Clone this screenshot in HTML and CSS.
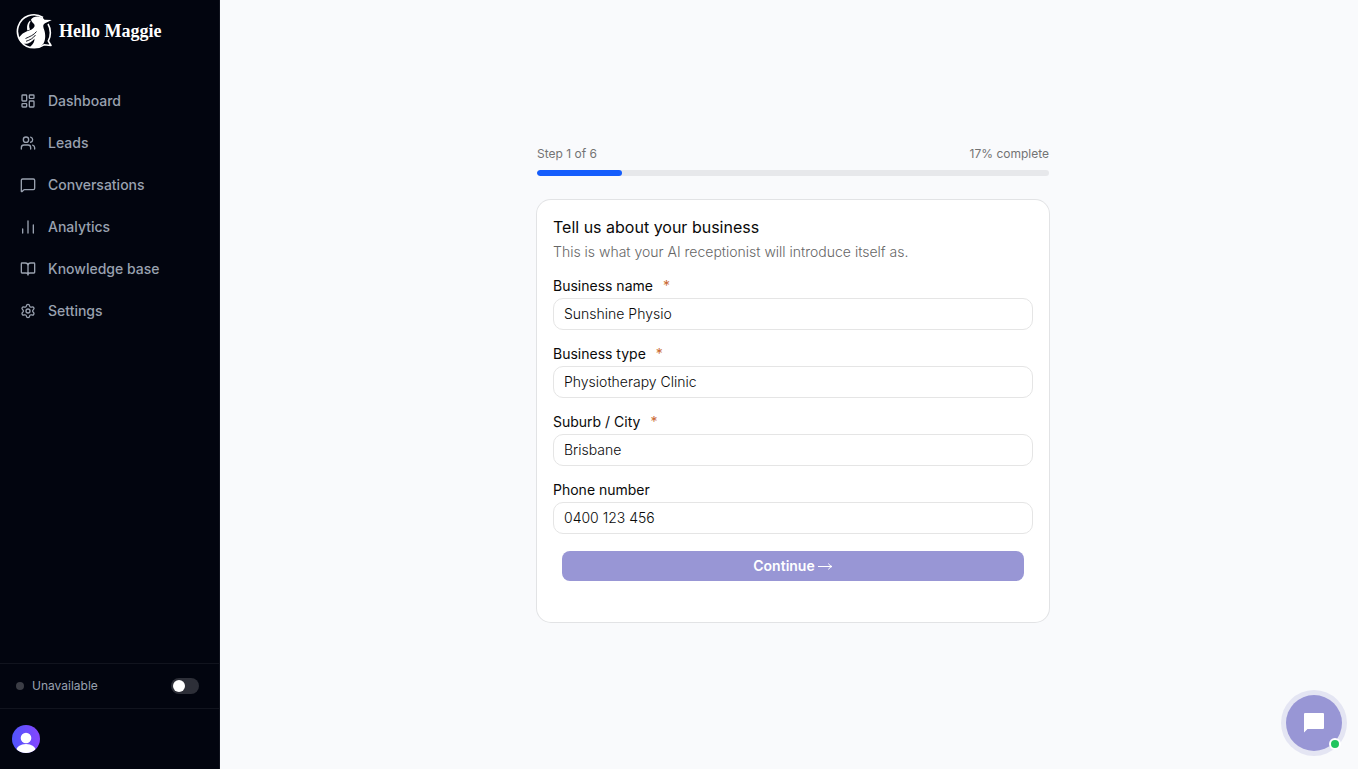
FILE: index.html
```html
<!DOCTYPE html>
<html lang="en">
<head>
<meta charset="utf-8">
<meta name="viewport" content="width=device-width, initial-scale=1">
<title>Hello Maggie</title>
<link rel="stylesheet" href="styles.css">
</head>
<body>
<div class="app">
  <aside class="sidebar">
    <a class="brand" href="#">
      <svg class="brand-mark" viewBox="0 0 36 36" aria-hidden="true">
        <path d="M27 4.500A16.500 16.500 0 1 0 18 34.800C22 34.900 25.500 33.500 28 31.800L35 32.500L32.300 28C35 23.500 35.200 16 32 11" fill="none" stroke="currentColor" stroke-width="1.600" stroke-linejoin="round"/>
        <path d="M15 6.500C16.500 4 20 3.200 23 3.700C26 4.100 27.500 5.200 28.500 6.800L35.800 7L29 10.300C27 11.500 27 13 27.700 15.500C29.500 20 30 26 27.500 30.500C25 34.500 20 35.300 14 34C17.500 31 18.500 28.500 18.500 25.500C16 29 11 32.500 5.500 30L2.500 26C4.500 21.500 8.500 19 12.500 17.800C16.500 16.500 19 14.500 18.500 12C18 10 15.500 9.500 15 6.500Z" fill="currentColor"/>
        <path d="M14 7.500C11 10.500 10.800 13.500 11.300 17.500L14 16.500C12.600 13.500 13 10.500 14.600 8.500Z" fill="currentColor"/>
        <path d="M20.500 18.500C18 22 14 23.500 9.500 25.500M19.500 22C17 25.500 14 27 10 28.300" fill="none" stroke="#02050f" stroke-width=".900"/>
      </svg>
      <span>Hello Maggie</span>
    </a>
    <nav class="nav" aria-label="Main">
      <a class="nav-item" href="#"><svg class="icon" viewBox="0 0 24 24"><rect x="3" y="3" width="7" height="9" rx="1"/><rect x="14" y="3" width="7" height="5" rx="1"/><rect x="14" y="12" width="7" height="9" rx="1"/><rect x="3" y="16" width="7" height="5" rx="1"/></svg>Dashboard</a>
      <a class="nav-item" href="#"><svg class="icon" viewBox="0 0 24 24"><path d="M16 21v-2a4 4 0 0 0-4-4H6a4 4 0 0 0-4 4v2"/><circle cx="9" cy="7" r="4"/><path d="M22 21v-2a4 4 0 0 0-3-3.870M16 3.130a4 4 0 0 1 0 7.750"/></svg>Leads</a>
      <a class="nav-item" href="#"><svg class="icon" viewBox="0 0 24 24"><path d="M22 17a2 2 0 0 1-2 2H6.800a2 2 0 0 0-1.400.600l-2.200 2.200A.700.700 0 0 1 2 21.300V5a2 2 0 0 1 2-2h16a2 2 0 0 1 2 2z"/></svg>Conversations</a>
      <a class="nav-item" href="#"><svg class="icon" viewBox="0 0 24 24"><path d="M4 21v-6M12 21V3M20 21V9"/></svg>Analytics</a>
      <a class="nav-item" href="#"><svg class="icon" viewBox="0 0 24 24"><path d="M12 7v14M3 18a1 1 0 0 1-1-1V4a1 1 0 0 1 1-1h5a4 4 0 0 1 4 4 4 4 0 0 1 4-4h5a1 1 0 0 1 1 1v13a1 1 0 0 1-1 1h-6a3 3 0 0 0-3 3 3 3 0 0 0-3-3z"/></svg>Knowledge base</a>
      <a class="nav-item" href="#"><svg class="icon" viewBox="0 0 24 24"><path d="M9.671 4.136a2.340 2.340 0 0 1 4.659 0 2.340 2.340 0 0 0 3.319 1.915 2.340 2.340 0 0 1 2.330 4.033 2.340 2.340 0 0 0 0 3.831 2.340 2.340 0 0 1-2.330 4.033 2.340 2.340 0 0 0-3.319 1.915 2.340 2.340 0 0 1-4.659 0 2.340 2.340 0 0 0-3.320-1.915 2.340 2.340 0 0 1-2.330-4.033 2.340 2.340 0 0 0 0-3.831A2.340 2.340 0 0 1 6.350 6.051a2.340 2.340 0 0 0 3.319-1.915"/><circle cx="12" cy="12" r="3"/></svg>Settings</a>
    </nav>
    <div class="availability">
      <span class="status-dot"></span>
      <label for="available">Unavailable</label>
      <input class="switch" id="available" type="checkbox" role="switch">
    </div>
    <div class="account">
      <button class="avatar" type="button" aria-label="Account">
        <svg viewBox="0 0 28 28" aria-hidden="true"><circle cx="14" cy="13" r="5.300"/><ellipse cx="14" cy="26" rx="10" ry="7"/></svg>
      </button>
    </div>
  </aside>
  <main class="main">
    <div class="onboarding">
      <div class="progress-text"><span id="step">Step 1 of 6</span><span>17% complete</span></div>
      <div class="progress" role="progressbar" aria-labelledby="step" aria-valuenow="17" aria-valuemin="0" aria-valuemax="100"><div class="progress-fill" style="width:16.6%"></div></div>
      <form class="card">
        <h1>Tell us about your business</h1>
        <p class="intro">This is what your AI receptionist will introduce itself as.</p>
        <div class="fields">
          <div class="field"><label for="name">Business name<span class="required">*</span></label><input id="name" type="text" value="Sunshine Physio"></div>
          <div class="field"><label for="type">Business type<span class="required">*</span></label><input id="type" type="text" value="Physiotherapy Clinic"></div>
          <div class="field"><label for="city">Suburb / City<span class="required">*</span></label><input id="city" type="text" value="Brisbane"></div>
          <div class="field"><label for="phone">Phone number</label><input id="phone" type="tel" value="0400 123 456"></div>
        </div>
        <button class="continue" type="button">Continue <svg viewBox="0 0 16 10" aria-hidden="true"><path d="M1 5.500h14M11.500 2.500q1 2.500 3.500 3q-2.500.500-3.500 3"/></svg></button>
      </form>
    </div>
  </main>
</div>
<button class="chat" type="button" aria-label="Open chat">
  <svg viewBox="0 0 24 24" aria-hidden="true"><path d="M21 2H3a1 1 0 0 0-1 1v18.500L5.500 18H21a1 1 0 0 0 1-1V3a1 1 0 0 0-1-1z"/></svg>
  <span class="online"></span>
</button>
</body>
</html>
```

FILE: styles.css
```css
* { box-sizing: border-box; }
body {
  margin: 0;
  font-family: Inter, "Liberation Sans", sans-serif;
  font-size: 14px;
  line-height: 20px;
  color: #0a0a0a;
  background: #f9fafc;
}
button, input { font: inherit; color: inherit; }
.app { display: flex; min-height: 100vh; }
.sidebar {
  display: flex;
  flex-direction: column;
  flex: none;
  width: 220px;
  background: #02050f;
  border-right: 1px solid #11141e;
  color: #99a1af;
}
.brand {
  display: flex;
  align-items: center;
  gap: 7px;
  height: 62px;
  padding-left: 16px;
  color: #fff;
  font: bold 18px/24px "Liberation Serif", serif;
  text-decoration: none;
}
.brand-mark { width: 36px; height: 36px; }
.nav {
  display: flex;
  flex-direction: column;
  flex: 1;
  gap: 4px;
  padding: 20px 8px;
}
.nav-item {
  display: flex;
  align-items: center;
  gap: 12px;
  height: 38px;
  padding: 0 12px;
  color: inherit;
  font-size: 14px;
  font-weight: 500;
  text-decoration: none;
}
.icon {
  width: 16px;
  height: 16px;
  fill: none;
  stroke: currentColor;
  stroke-width: 2;
  stroke-linecap: round;
  stroke-linejoin: round;
}
.availability {
  display: flex;
  align-items: center;
  gap: 8px;
  height: 45px;
  padding: 0 20px 0 16px;
  border-top: 1px solid #11141e;
  font-size: 12px;
}
.availability label { flex: 1; }
.status-dot { width: 8px; height: 8px; border-radius: 50%; background: #3b3d45; }
.switch {
  appearance: none;
  display: flex;
  align-items: center;
  width: 28px;
  height: 16px;
  margin: 0;
  padding: 2px;
  border-radius: 8px;
  background: #2d2f38;
}
.switch::before { content: ""; width: 12px; height: 12px; border-radius: 50%; background: #fff; }
.switch:checked { justify-content: flex-end; }
.account { display: flex; align-items: center; height: 61px; padding: 0 12px; border-top: 1px solid #11141e; }
.avatar {
  width: 28px;
  height: 28px;
  padding: 0;
  border: 0;
  border-radius: 50%;
  overflow: hidden;
  background: linear-gradient(90deg, #4f55fb, #8746ff);
}
.avatar svg { display: block; fill: #fff; }
.main {
  display: flex;
  flex: 1;
  align-items: center;
  justify-content: center;
  padding: 24px 0 26px 8px;
}
.onboarding { width: 100%; max-width: 512px; }
.progress-text {
  display: flex;
  justify-content: space-between;
  margin-bottom: 8px;
  color: #737373;
  font-size: 12px;
  line-height: 16px;
}
.progress { height: 6px; margin-bottom: 24px; border-radius: 3px; overflow: hidden; background: #e7e8eb; }
.progress-fill { height: 100%; border-radius: 3px; background: #155dfc; }
.card {
  padding: 16px 16px 41px;
  border-radius: 14px;
  background: #fff;
  box-shadow: 0 0 0 1px #e2e3e5;
}
.card h1 { margin: 0 0 4px; font-size: 16px; line-height: 22px; font-weight: 400; }
.intro { margin: 0 0 14px; color: #666; font-weight: 300; }
.fields { display: grid; gap: 14px; }
.field { display: grid; gap: 2px; }
.required { margin-left: 10px; color: #ca6a34; }
.field input {
  width: 100%;
  height: 32px;
  padding: 0 10px;
  border: 1px solid #e5e5e5;
  border-radius: 10px;
  background: #fff;
  font-weight: 300;
}
.continue {
  display: flex;
  align-items: center;
  justify-content: center;
  gap: 2px;
  width: calc(100% - 18px);
  height: 30px;
  margin: 17px auto 0;
  border: 0;
  border-radius: 8px;
  background: #9896d5;
  color: #fff;
  font-weight: 600;
}
.continue svg { width: 16px; height: 10px; fill: none; stroke: currentColor; }
.chat {
  position: fixed;
  right: 16px;
  bottom: 18px;
  display: grid;
  place-items: center;
  width: 56px;
  height: 56px;
  padding: 0;
  border: 0;
  border-radius: 50%;
  background: #9896d5;
  box-shadow: 0 0 0 5px #e4e5f3;
}
.chat svg { width: 24px; height: 24px; fill: #fff; }
.online {
  position: absolute;
  right: 1px;
  bottom: 1px;
  width: 12px;
  height: 12px;
  border: 2px solid #fff;
  border-radius: 50%;
  background: #22c55e;
}
```
